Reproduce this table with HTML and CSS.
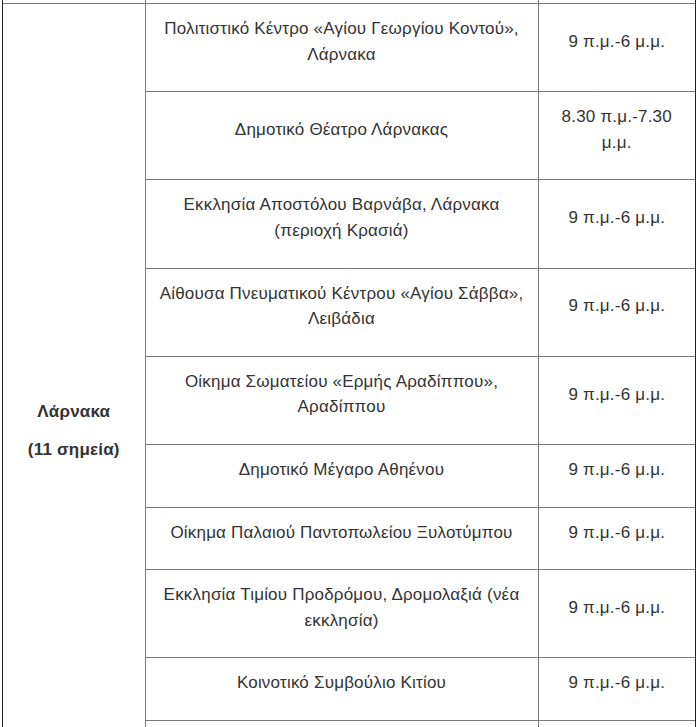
FILE: index.html
```html
<!DOCTYPE html>
<html lang="el">
<head>
<meta charset="utf-8">
<title>Σημεία - Λάρνακα</title>
<link rel="stylesheet" href="styles.css">
</head>
<body>
<div class="sheet">
<table class="points">
<colgroup>
<col class="c-region">
<col class="c-place">
<col class="c-hours">
</colgroup>
<tbody>
<tr class="filler"><td class="region"></td><td class="place"></td><td class="hours"></td></tr>
<tr>
<td class="region" rowspan="11"><p><strong>Λάρνακα</strong></p><p><strong>(11 σημεία)</strong></p></td>
<td class="place"><p>Πολιτιστικό Κέντρο «Αγίου Γεωργίου Κοντού», Λάρνακα</p></td>
<td class="hours"><p>9 π.μ.-6 μ.μ.</p></td>
</tr>
<tr>
<td class="place"><p>Δημοτικό Θέατρο Λάρνακας</p></td>
<td class="hours"><p>8.30 π.μ.-7.30 μ.μ.</p></td>
</tr>
<tr>
<td class="place"><p>Εκκλησία Αποστόλου Βαρνάβα, Λάρνακα (περιοχή Κρασιά)</p></td>
<td class="hours"><p>9 π.μ.-6 μ.μ.</p></td>
</tr>
<tr>
<td class="place"><p>Αίθουσα Πνευματικού Κέντρου «Αγίου Σάββα», Λειβάδια</p></td>
<td class="hours"><p>9 π.μ.-6 μ.μ.</p></td>
</tr>
<tr>
<td class="place"><p>Οίκημα Σωματείου «Ερμής Αραδίππου», Αραδίππου</p></td>
<td class="hours"><p>9 π.μ.-6 μ.μ.</p></td>
</tr>
<tr>
<td class="place"><p>Δημοτικό Μέγαρο Αθηένου</p></td>
<td class="hours"><p>9 π.μ.-6 μ.μ.</p></td>
</tr>
<tr>
<td class="place"><p>Οίκημα Παλαιού Παντοπωλείου Ξυλοτύμπου</p></td>
<td class="hours"><p>9 π.μ.-6 μ.μ.</p></td>
</tr>
<tr>
<td class="place"><p>Εκκλησία Τιμίου Προδρόμου, Δρομολαξιά (νέα εκκλησία)</p></td>
<td class="hours"><p>9 π.μ.-6 μ.μ.</p></td>
</tr>
<tr>
<td class="place"><p>Κοινοτικό Συμβούλιο Κιτίου</p></td>
<td class="hours"><p>9 π.μ.-6 μ.μ.</p></td>
</tr>
<tr>
<td class="place"><p>Αίθουσα Εκδηλώσεων Κοινοτικού Συμβουλίου Ορόκλινης, Ορόκλινη</p></td>
<td class="hours"><p>9 π.μ.-6 μ.μ.</p></td>
</tr>
<tr>
<td class="place"><p>Κοινοτικό Συμβούλιο Κόρνου</p></td>
<td class="hours"><p>9 π.μ.-6 μ.μ.</p></td>
</tr>
</tbody>
</table>
</div>
</body>
</html>
```

FILE: styles.css
```css
html, body {
  margin: 0;
  padding: 0;
  background: #ffffff;
}

body {
  overflow: hidden;
  font-family: "Liberation Sans", Arial, "Noto Sans", sans-serif;
  font-size: 17px;
  letter-spacing: 0.2px;
  line-height: 25.6px;
  color: #333333;
}

.sheet {
  width: 692px;
  margin-left: 2px;
  border-left: 1px solid #222222;
  border-right: 1px solid #222222;
}

.points {
  width: 100%;
  border-collapse: collapse;
  table-layout: fixed;
}

.c-region { width: 142px; }
.c-place { width: 393px; }
.c-hours { width: auto; }

.points td {
  border: 1px solid #7a7a7a;
  padding: 12px 10px;
  text-align: center;
  vertical-align: middle;
}

.points td.region { border-left: none; }
.points td.hours { border-right: none; }

.points td p {
  margin: 0 0 12px;
}

.points td.region p {
  margin-bottom: 13px;
}

.points tr.filler td {
  height: 3px;
  padding: 0;
  border-top: none;
}
```
